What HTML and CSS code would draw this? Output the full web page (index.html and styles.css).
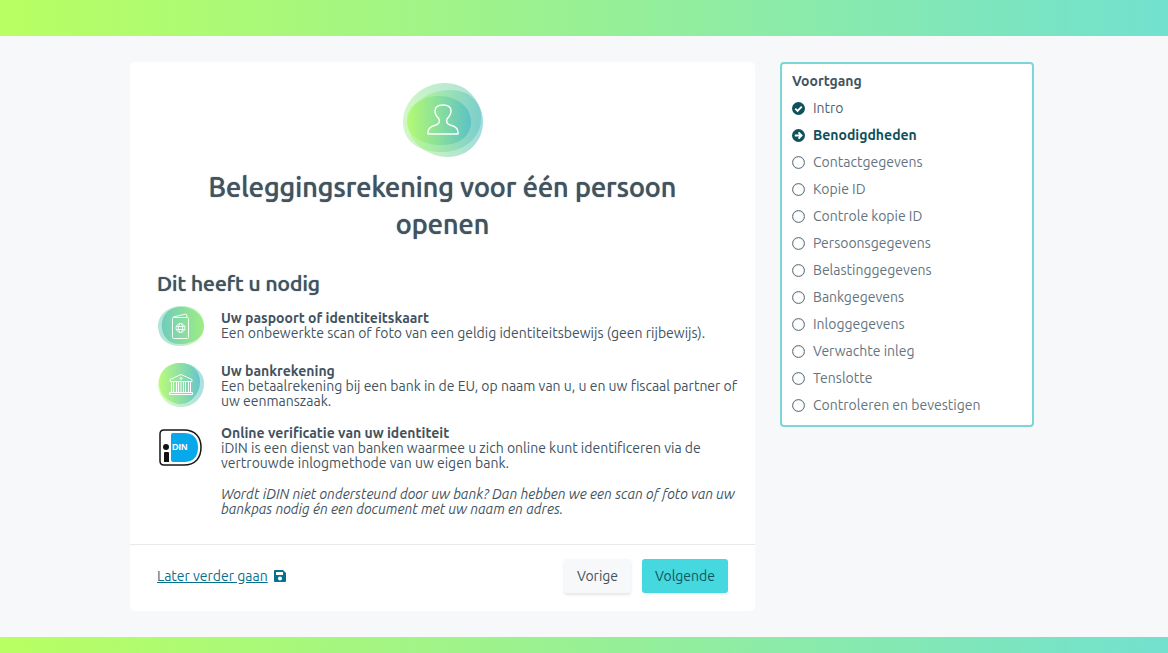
FILE: index.html
```html
<!DOCTYPE html>
<html lang="nl">
<head>
  <meta charset="UTF-8">
  <meta name="viewport" content="width=device-width, initial-scale=1.0">
  <title>Beleggingsrekening openen</title>
  <link rel="stylesheet" href="styles.css">
</head>
<body>
  <header class="header"></header>
  <div class="container">
    <main class="card">
      <div class="card__body">
        <svg class="card__logo" viewBox="0 0 82 76" aria-hidden="true">
          <defs>
            <linearGradient id="green" x1="0" x2="1" y1="0" y2="0">
              <stop offset="0" stop-color="#b2fb6c"/>
              <stop offset="1" stop-color="#55bfc6"/>
            </linearGradient>
            <linearGradient id="pale" x1="0" x2="1" y1="0" y2="0">
              <stop offset="0" stop-color="#a4f08c"/>
              <stop offset="1" stop-color="#55bfb8"/>
            </linearGradient>
            <linearGradient id="blue" x1="0" x2="1" y1="0" y2="0">
              <stop offset="0" stop-color="#64c8b8"/>
              <stop offset="1" stop-color="#96ec78"/>
            </linearGradient>
          </defs>
          <path d="M1 40C1 19 20 1 43 1c20 0 33 14 36 31 2 22-15 37-37 38C18 71 1 60 1 40z" fill="url(#pale)" opacity=".5"/>
          <path d="M6 41C6 22 26 8 48 8c20 0 33 13 33 32 0 20-16 35-35 35C28 75 6 62 6 41z" fill="url(#green)" opacity=".55"/>
          <path d="M5 39c0-15 15-25 32-25 18 0 32 11 32 26 0 14-12 23-29 23C21 63 5 55 5 39z" fill="url(#green)" opacity=".85"/>
          <path d="M26 52v-2c0-4 4-6 8-7 3-1 4-3 3-6-3-3-4-5-4-8 0-4 3-6 8-6s8 2 8 6c0 3-1 5-4 8-1 3 0 5 3 6 4 1 8 3 8 7v2z" fill="none" stroke="#fff" stroke-width="1.4" stroke-linejoin="round"/>
        </svg>
        <h1>Beleggingsrekening voor één persoon openen</h1>
        <h2>Dit heeft u nodig</h2>
        <ul class="needs">
          <li class="needs__item">
            <svg class="needs__icon" viewBox="0 3 48 48" aria-hidden="true">
              <path d="M1 24C1 12 12 4 25 4c14 0 22 9 22 20 0 12-10 20-24 20S1 36 1 24z" fill="url(#blue)" opacity=".5"/>
              <path d="M5 26C4 13 12 5 24 5s23 8 23 19-9 17-22 18C13 43 6 36 5 26z" fill="url(#blue)" opacity=".85"/>
              <g fill="none" stroke="#fff" stroke-width="1" opacity=".9">
                <rect x="15.500" y="15.500" width="16" height="21" rx="1"/>
                <path d="M16 15l13-3q1 0 1 3"/>
                <circle cx="23.500" cy="26" r="4.500"/>
                <ellipse cx="23.500" cy="26" rx="2" ry="4.500"/>
                <path d="M19 24.500h9M19 27.500h9"/>
              </g>
            </svg>
            <div class="needs__text">
              <h3>Uw paspoort of identiteitskaart</h3>
              <p>Een onbewerkte scan of foto van een geldig identiteitsbewijs (geen rijbewijs).</p>
            </div>
          </li>
          <li class="needs__item">
            <svg class="needs__icon" viewBox="0 -3 48 48" aria-hidden="true">
              <path d="M1 23C2 10 12 2 24 2s23 9 23 20c0 14-10 24-23 24S1 36 1 23z" fill="url(#green)" opacity=".5"/>
              <path d="M2 22C2 10 11 2 23 2c13 0 20 8 20 19S34 43 24 43 2 35 2 22z" fill="url(#green)" opacity=".8"/>
              <g fill="none" stroke="#fff" stroke-width="1" opacity=".95">
                <path d="M13 20.500v-2l11-5 11 5v2zM14.500 31.500h19M12.500 33.500h23v-2h-23z"/>
                <path d="M14.500 20v11M16.500 20v11M19.500 20v11M21.500 20v11M26.500 20v11M28.500 20v11M31.500 20v11M33.500 20v11M24 20v11"/>
                <circle cx="24" cy="17.500" r="1"/>
              </g>
            </svg>
            <div class="needs__text">
              <h3>Uw bankrekening</h3>
              <p>Een betaalrekening bij een bank in de EU, op naam van u, u en uw fiscaal partner of uw eenmanszaak.</p>
            </div>
          </li>
          <li class="needs__item">
            <svg class="needs__icon" viewBox="0 -4 48 48" aria-hidden="true">
              <path d="M7 6h20c11 0 17 7 17 17.500S38 41 27 41H7q-4 0-4-4V10q0-4 4-4z" fill="#fff" stroke="#161616" stroke-width="1.500"/>
              <path d="M16 9h11c9 0 14 5 14 14.500S36 38 27 38H16q-2 0-2-2V11q0-2 2-2z" fill="#08a9ea"/>
              <circle cx="9" cy="23" r="3" fill="#111"/>
              <path d="M8 28h3q1 0 1 1v9H7v-9q0-1 1-1z" fill="#111"/>
              <text class="idin" x="15" y="26">DIN</text>
            </svg>
            <div class="needs__text">
              <h3>Online verificatie van uw identiteit</h3>
              <p>iDIN is een dienst van banken waarmee u zich online kunt identificeren via de vertrouwde inlogmethode van uw eigen bank.</p>
              <p class="needs__note">Wordt iDIN niet ondersteund door uw bank? Dan hebben we een scan of foto van uw bankpas nodig én een document met uw naam en adres.</p>
            </div>
          </li>
        </ul>
      </div>
      <div class="card__footer">
        <a class="later" href="#"><span>Later verder gaan</span>
          <svg viewBox="0 0 12 12" aria-hidden="true">
            <path fill-rule="evenodd" d="M1 0h8l3 3v8q0 1-1 1H1q-1 0-1-1V1q0-1 1-1zm1 2v3h7V2zm4 4.500a2 2 0 1 0 0 4 2 2 0 0 0 0-4z"/>
          </svg>
        </a>
        <button class="btn" type="button">Vorige</button>
        <button class="btn btn_primary" type="button">Volgende</button>
      </div>
    </main>
    <!-- Voortgang -->
    <aside class="progress">
      <h4>Voortgang</h4>
      <ol class="progress__list">
        <li class="done">
          <svg viewBox="0 0 14 14" aria-hidden="true"><circle cx="7" cy="7" r="7"/><path d="M3.500 7.200L6 9.700l4.500-4.800"/></svg>
          Intro
        </li>
        <li class="active">
          <svg viewBox="0 0 14 14" aria-hidden="true"><circle cx="7" cy="7" r="7"/><path d="M3 7h7M7 3.700L10.300 7 7 10.300"/></svg>
          Benodigdheden
        </li>
        <li>Contactgegevens</li>
        <li>Kopie ID</li>
        <li>Controle kopie ID</li>
        <li>Persoonsgegevens</li>
        <li>Belastinggegevens</li>
        <li>Bankgegevens</li>
        <li>Inloggegevens</li>
        <li>Verwachte inleg</li>
        <li>Tenslotte</li>
        <li>Controleren en bevestigen</li>
      </ol>
    </aside>
  </div>
  <footer class="footer"></footer>
</body>
</html>
```
FILE: styles.css
```css
* {
  box-sizing: border-box;
  margin: 0;
  padding: 0;
}
body {
  min-height: 100vh;
  display: flex;
  flex-direction: column;
  font-family: Ubuntu, "Noto Sans", sans-serif;
  font-size: 14px;
  line-height: 15px;
  color: #42535f;
  background-color: #f6f8fa;
}
.header,
.footer {
  background: linear-gradient(90deg, #b8ff62, #98f094 50%, #72e1cf);
}
.header {
  height: 36px;
}
.footer {
  height: 16px;
  margin-top: auto;
}
.container {
  width: 100%;
  max-width: 908px;
  margin: 0 auto;
  padding: 26px 4px 26px 0;
  display: flex;
  align-items: flex-start;
  gap: 25px;
}

/* Карточка */
.card {
  flex: 1;
  background-color: #fff;
  border-radius: 5px;
}
.card__body {
  padding: 20px 27px 21px;
}
.card__logo {
  display: block;
  width: 82px;
  height: 76px;
  margin: 0 auto 11px;
}
h1 {
  padding: 0 40px;
  font-size: 27px;
  line-height: 37px;
  font-weight: 500;
  text-align: center;
}
h1,
h2 {
  text-shadow: 0 0 1px #42535f;
}
h2 {
  margin-top: 27px;
  font-size: 21px;
  line-height: 26px;
  font-weight: 500;
}
.needs {
  margin-top: 9px;
  margin-right: -12px;
  list-style: none;
  display: flex;
  flex-direction: column;
  gap: 5px;
}
.needs__item {
  display: flex;
  gap: 16px;
}
.needs__icon {
  flex: none;
  width: 48px;
  height: 48px;
  overflow: visible;
}
.needs__text {
  padding: 6px 0;
}
.needs__text h3 {
  font-size: 14px;
  line-height: 15px;
}
.needs__note {
  margin-top: 16px;
  font-style: italic;
}
.idin {
  font-family: "Liberation Sans", sans-serif;
  font-size: 9px;
  font-weight: 700;
  fill: #fff;
}
.card__footer {
  display: flex;
  align-items: center;
  gap: 11px;
  padding: 14px 27px 18px;
  border-top: 1px solid #e6eaed;
}
.later {
  margin-right: auto;
  display: flex;
  align-items: center;
  gap: 6px;
  color: #07708f;
  text-decoration: none;
}
.later span {
  text-decoration: underline;
}
.later svg {
  width: 12px;
  height: 12px;
  fill: #07708f;
}
.btn {
  height: 34px;
  padding: 0 13px;
  border: none;
  border-radius: 3px;
  font: inherit;
  color: #42535f;
  background-color: #f6f8fa;
  box-shadow: 0 2px 3px rgba(0, 0, 0, .1);
  cursor: pointer;
}
.btn_primary {
  color: #10565f;
  background-color: #45d8df;
  box-shadow: 0 2px 3px rgba(0, 0, 0, .06);
}

/* Прогресс */
.progress {
  width: 254px;
  padding: 4px 10px 6px;
  border: 2px solid #7dd5d8;
  border-radius: 4px;
  background-color: #fff;
}
.progress h4 {
  font-size: 14px;
  line-height: 27px;
}
.progress__list {
  list-style: none;
}
.progress li {
  display: flex;
  align-items: center;
  gap: 8px;
  line-height: 27px;
  color: #64747e;
}
/* пустой кружок */
.progress li:not(.done):not(.active)::before {
  content: "";
  box-sizing: border-box;
  width: 13px;
  height: 13px;
  border: 1px solid #64747e;
  border-radius: 50%;
  box-shadow: inset 0 0 1px #64747e;
}
.progress svg {
  width: 13px;
  height: 13px;
  fill: #10505a;
}
.progress svg path {
  fill: none;
  stroke: #fff;
  stroke-width: 2;
}
.progress .done {
  color: #4f5f6a;
}
.progress .active {
  font-weight: 700;
  color: #10505a;
}
```
